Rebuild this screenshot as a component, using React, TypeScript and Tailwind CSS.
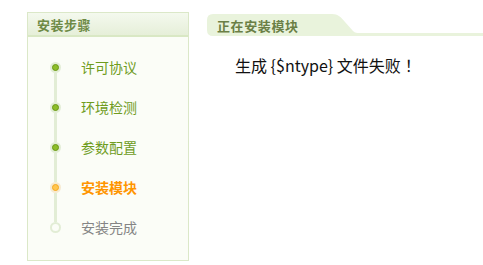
import React from "react";

type Status = "done" | "active" | "todo";
const steps: { label: string; status: Status }[] = [
  { label: "许可协议", status: "done" },
  { label: "环境检测", status: "done" },
  { label: "参数配置", status: "done" },
  { label: "安装模块", status: "active" },
  { label: "安装完成", status: "todo" },
];

function Dot({ status }: { status: Status }) {
  if (status === "todo") {
    return (
      <div className="w-[11px] h-[11px] rounded-full bg-[#e2edd5] flex items-center justify-center shrink-0">
        <div className="w-[7px] h-[7px] rounded-full bg-[#fbfdf7]" />
      </div>
    );
  }
  if (status === "active") {
    return (
      <div className="w-[11px] h-[11px] rounded-full bg-[#f6ead0] flex items-center justify-center shrink-0">
        <div className="w-[7px] h-[7px] rounded-full bg-[#ffc64f] border border-[#f6a81f]" />
      </div>
    );
  }
  return (
    <div className="w-[11px] h-[11px] rounded-full bg-[#e2edd5] flex items-center justify-center shrink-0">
      <div className="w-[7px] h-[7px] rounded-full bg-[#8dbd2a] border border-[#6a9a12]" />
    </div>
  );
}

export default function App() {
  return (
    <div
      className="w-[483px] h-[265px] bg-white flex items-start pl-[27px] pt-[12px]"
      style={{ fontFamily: '"Noto Sans CJK SC", "Liberation Sans", sans-serif' }}
    >
      {/* left panel */}
      <div className="w-[162px] h-[249px] border border-[#dbe8c8] bg-[#fbfdf7] flex flex-col shrink-0">
        <div className="h-[24px] bg-gradient-to-b from-[#f4f9ee] to-[#e6efd9] border-b-2 border-[#d9e8c4] flex items-center pl-[9px]">
          <span className="text-[13px] font-bold text-[#6e8a45] tracking-[0.5px] leading-none">安装步骤</span>
        </div>
        <div className="flex flex-col pt-[10px] pl-[22px]">
          {steps.map((s, i) => (
            <div key={s.label} className="h-[40px] flex items-stretch">
              <div className="w-[11px] flex flex-col items-center">
                <div className={`flex-1 w-[3px] ${i === 0 ? "bg-transparent" : "bg-[#e2edd5]"}`} />
                <Dot status={s.status} />
                <div className={`flex-1 w-[3px] ${i === steps.length - 1 ? "bg-transparent" : "bg-[#e2edd5]"}`} />
              </div>
              <div className="flex items-center pl-[20px]">
                <span
                  className={`text-[14px] leading-none ${
                    s.status === "done"
                      ? "text-[#6f9c1e]"
                      : s.status === "active"
                      ? "text-[#ff9500] font-bold"
                      : "text-[#858585]"
                  }`}
                >
                  {s.label}
                </span>
              </div>
            </div>
          ))}
        </div>
      </div>

      {/* right area */}
      <div className="flex-1 ml-[18px] flex flex-col pt-[2px]">
        <div className="h-[22px] flex items-end">
          <div className="relative w-[153px] h-[22px] shrink-0 flex items-center pl-[10px]">
            <svg className="absolute inset-0" width="153" height="22" viewBox="0 0 153 22">
              <path
                d="M0,6 Q0,0 6,0 H125 C131,0 134,3 138,8 L146,17 C148,19 150,19 153,19 V22 H6 Q0,22 0,16 Z"
                fill="#e9f3dc"
              />
            </svg>
            <span className="relative text-[13px] font-bold text-[#6b7f45] tracking-[0.6px] leading-none">
              正在安装模块
            </span>
          </div>
          <div className="flex-1 h-[3px] bg-[#e9f3dc]" />
        </div>
        <div className="pl-[28px] mt-[17px] text-[16px] leading-[24px] text-[#111]">
          生成 {"{$ntype}"} 文件失败
          <span style={{ fontFamily: '"Noto Sans CJK JP", sans-serif' }}>！</span>
        </div>
      </div>
    </div>
  );
}
